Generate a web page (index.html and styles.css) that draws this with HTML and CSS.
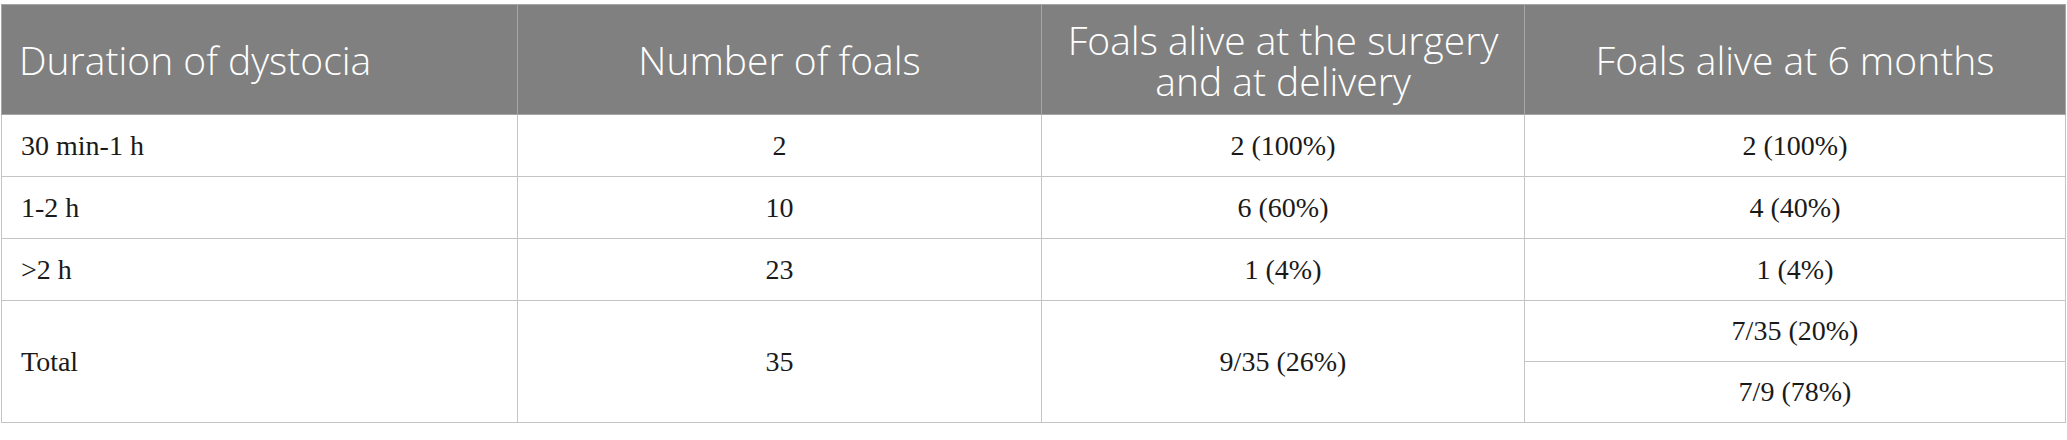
FILE: index.html
```html
<!DOCTYPE html>
<html>
<head>
<meta charset="utf-8">
<link rel="stylesheet" href="styles.css">
</head>
<body>
<table class="data">
  <colgroup>
    <col class="c1"><col class="c2"><col class="c3"><col class="c4">
  </colgroup>
  <thead>
    <tr>
      <th class="left">Duration of dystocia</th>
      <th>Number of foals</th>
      <th>Foals alive at the surgery<br>and at delivery</th>
      <th>Foals alive at 6 months</th>
    </tr>
  </thead>
  <tbody>
    <tr>
      <td class="left">30 min-1 h</td>
      <td>2</td>
      <td>2 (100%)</td>
      <td>2 (100%)</td>
    </tr>
    <tr>
      <td class="left">1-2 h</td>
      <td>10</td>
      <td>6 (60%)</td>
      <td>4 (40%)</td>
    </tr>
    <tr>
      <td class="left">&gt;2 h</td>
      <td>23</td>
      <td>1 (4%)</td>
      <td>1 (4%)</td>
    </tr>
    <tr class="sub">
      <td class="left" rowspan="2">Total</td>
      <td rowspan="2">35</td>
      <td rowspan="2">9/35 (26%)</td>
      <td>7/35 (20%)</td>
    </tr>
    <tr class="sub">
      <td>7/9 (78%)</td>
    </tr>
  </tbody>
</table>
</body>
</html>
```

FILE: styles.css
```css
html, body {
  margin: 0;
  padding: 0;
  background: #ffffff;
}
body {
  padding: 4px 0 0 1px;
}
.data {
  border-collapse: collapse;
  width: 2064px;
  table-layout: fixed;
}
.c1 { width: 516px; }
.c2 { width: 524px; }
.c3 { width: 483px; }
.c4 { width: 541px; }
.data th {
  background: #808080;
  color: #ffffff;
  font-family: "Open Sans", "Noto Sans", sans-serif;
  font-weight: 300;
  font-size: 39px;
  line-height: 41px;
  height: 110px;
  padding: 0 6px;
  text-align: center;
  vertical-align: middle;
  border: 1px solid #a6a6a6;
  box-sizing: border-box;
  white-space: nowrap;
}
.data td {
  font-family: "Liberation Serif", "Times New Roman", serif;
  font-size: 28px;
  color: #1a1a1a;
  height: 62px;
  padding: 0 10px;
  text-align: center;
  vertical-align: middle;
  border: 1px solid #c4c4c4;
  box-sizing: border-box;
}
.data tr.sub td {
  height: 61px;
}
.data th.left {
  text-align: left;
  padding-left: 17px;
}
.data td.left {
  text-align: left;
  padding-left: 19px;
}
```
